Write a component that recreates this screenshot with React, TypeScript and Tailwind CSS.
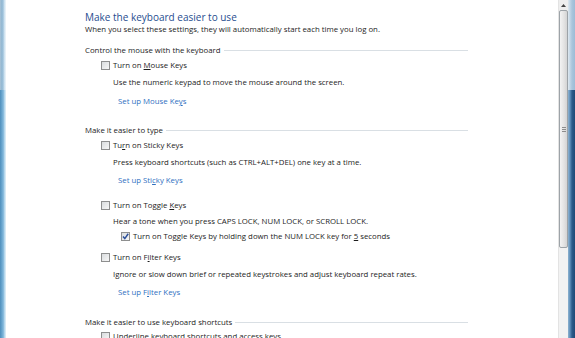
import React from "react";

const font = "font-['Open_Sans','Noto_Sans',sans-serif]";

function Cb({ checked = false }: { checked?: boolean }) {
  return (
    <span className="relative inline-block w-[9px] h-[9px] shrink-0 border border-[#8e8f8f] bg-[linear-gradient(135deg,#d9dcde,#f7f7f7)]">
      {checked && (
        <svg viewBox="0 0 9 9" className="absolute left-[-1px] top-[-1px] w-[9px] h-[9px]">
          <path d="M2 4.6 L3.8 6.6 L7.2 1.8" stroke="#2b4f9a" strokeWidth="1.5" fill="none" />
        </svg>
      )}
    </span>
  );
}

function U({ children }: { children: React.ReactNode }) {
  return <span className="underline underline-offset-[1px]">{children}</span>;
}

function Heading({ children, mt }: { children: React.ReactNode; mt: string }) {
  return (
    <div className={`flex items-center h-[12px] leading-[12px] w-[383px] ${mt}`}>
      <span className="whitespace-nowrap">{children}</span>
      <span className="flex-1 h-px bg-[#d9dfe4] ml-[3px]" />
    </div>
  );
}

function CheckRow({ children, mt, checked = false, pl = "pl-[16px]" }: { children: React.ReactNode; mt: string; checked?: boolean; pl?: string }) {
  return (
    <div className={`flex items-center gap-[3px] h-[12px] leading-[12px] ${pl} ${mt} whitespace-nowrap`}>
      <Cb checked={checked} />
      <span>{children}</span>
    </div>
  );
}

function Desc({ children, mt }: { children: React.ReactNode; mt: string }) {
  return <div className={`h-[12px] leading-[12px] pl-[28px] whitespace-nowrap ${mt}`}>{children}</div>;
}

function Link({ children, mt }: { children: React.ReactNode; mt: string }) {
  return <div className={`h-[12px] leading-[12px] pl-[33px] whitespace-nowrap text-[#2f6fbf] ${mt}`}>{children}</div>;
}

export default function App() {
  return (
    <div className={`w-[575px] h-[338px] flex overflow-hidden bg-white ${font}`}>
      <div className="w-[6px] h-full flex flex-col">
        <div className="h-[90px] bg-[linear-gradient(90deg,#a9c3d6_0px,#8fb6d2_2px,#b9d5e8_4px,#e6f0f7_5px)]" />
        <div className="flex-1 bg-[linear-gradient(90deg,#4f8fbc_0px,#6aa6cf_2px,#93c3e2_4px,#d5e9f5_5px)]" />
      </div>
      <div className="flex-1 pl-[79px] pt-[12px] text-[7.8px] text-[#1c1c1c] overflow-hidden">
        <div className="h-[11px] leading-[11px] text-[10px] text-[#1f4d8f] whitespace-nowrap">Make the keyboard easier to use</div>
        <div className="h-[12px] leading-[12px] whitespace-nowrap">When you select these settings, they will automatically start each time you log on.</div>

        <Heading mt="mt-[9px]">Control the mouse with the keyboard</Heading>
        <CheckRow mt="mt-[3px]">Turn on <U>M</U>ouse Keys</CheckRow>
        <Desc mt="mt-[5px]">Use the numeric keypad to move the mouse around the screen.</Desc>
        <Link mt="mt-[7px]">Set up Mouse Ke<U>y</U>s</Link>

        <Heading mt="mt-[17px]">Make it easier to type</Heading>
        <CheckRow mt="mt-[3px]">Tu<U>r</U>n on Sticky Keys</CheckRow>
        <Desc mt="mt-[5px]">Press keyboard shortcuts (such as CTRL+ALT+DEL) one key at a time.</Desc>
        <Link mt="mt-[6px]">Set up Sti<U>c</U>ky Keys</Link>

        <CheckRow mt="mt-[13px]">Turn on Toggle <U>K</U>eys</CheckRow>
        <Desc mt="mt-[4px]">Hear a tone when you press CAPS LOCK, NUM LOCK, or SCROLL LOCK.</Desc>
        <CheckRow mt="mt-[3px]" pl="pl-[36px]" checked>
          Turn on Toggle Keys by holding down the NUM LOCK key for <U>5</U> seconds
        </CheckRow>
        <CheckRow mt="mt-[9px]">Turn on F<U>i</U>lter Keys</CheckRow>
        <Desc mt="mt-[5px]">Ignore or slow down brief or repeated keystrokes and adjust keyboard repeat rates.</Desc>
        <Link mt="mt-[6px]">Set up F<U>i</U>lter Keys</Link>

        <Heading mt="mt-[18px]">Make it easier to use keyboard shortcuts</Heading>
        <CheckRow mt="mt-[2px]">Underline keyboard shortcuts and access keys</CheckRow>
      </div>
      <div className="w-[10px] h-full flex flex-col bg-[#eeeeee] border-l border-[#e3e3e3]">
        <div className="h-[10px] flex items-center justify-center">
          <svg viewBox="0 0 7 4" className="w-[5px] h-[3px]">
            <path d="M0 4 L3.5 0 L7 4 Z" fill="#444" />
          </svg>
        </div>
        <div className="h-[238px] rounded-[2px] border border-[#9da3a8] bg-[linear-gradient(90deg,#f3f3f3,#e2e2e2_60%,#d4d4d4)] flex items-center justify-center">
          <div className="flex flex-col gap-[1px]">
            <div className="w-[4px] h-px bg-[#8c8c8c]" />
            <div className="w-[4px] h-px bg-[#8c8c8c]" />
            <div className="w-[4px] h-px bg-[#8c8c8c]" />
          </div>
        </div>
        <div className="flex-1 bg-[#f2f2f2]" />
      </div>
      <div className="w-[7px] h-full flex flex-col">
        <div className="h-[90px] bg-[linear-gradient(90deg,#dfe8ef_0px,#c2d6e6_2px,#a9c5dc_4px,#9cbcd6_7px)]" />
        <div className="flex-1 bg-[linear-gradient(90deg,#8fb3cf_0px,#5f8fba_2px,#2c5b8a_4px,#1f4a77_7px)]" />
      </div>
    </div>
  );
}
